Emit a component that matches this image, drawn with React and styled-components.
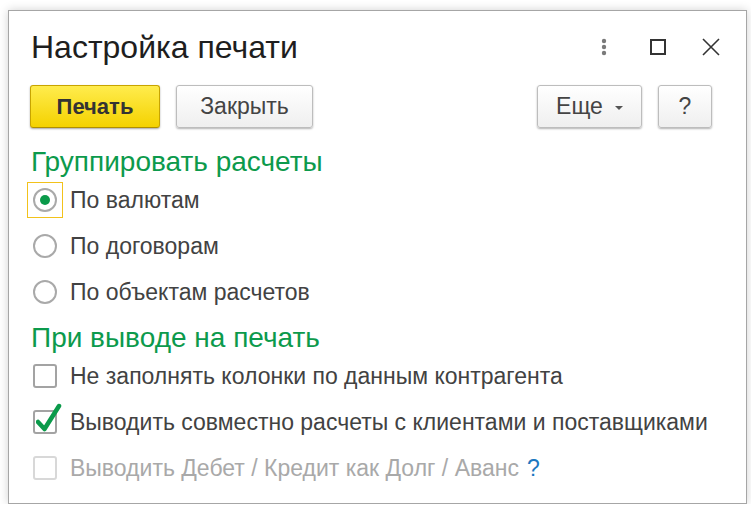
import React from "react";
import styled, { createGlobalStyle, css } from "styled-components";

const Global = createGlobalStyle`
  html, body { margin: 0; padding: 0; background: #fff; }
  body { font-family: "Liberation Sans", Arial, sans-serif; }
  * { box-sizing: border-box; }
`;

const Window = styled.div`
  margin: 10px 0 0 8px;
  width: 739px;
  height: 494px;
  border: 1px solid #a6a6a6;
  background: #fff;
  box-shadow: 0 0 9px rgba(0, 0, 0, 0.18);
  padding: 18px 26px 0 18px;
  display: flex;
  flex-direction: column;
`;

const TitleBar = styled.div`
  display: flex;
  align-items: center;
  height: 36px;
`;

const Title = styled.h1`
  margin: 0 0 0 4px;
  flex: 1;
  font-size: 32px;
  font-weight: normal;
  line-height: 36px;
  color: #1e1e1e;
`;

const TitleIcons = styled.div`
  display: flex;
  align-items: center;
`;

const IconBtn = styled.span`
  display: flex;
  align-items: center;
  justify-content: center;
  width: ${(p) => p.$w}px;
  height: 26px;
  margin-left: ${(p) => p.$ml || 0}px;
`;

const Toolbar = styled.div`
  display: flex;
  align-items: center;
  gap: 16px;
  margin: 20px 8px 0 3px;
`;

const Spacer = styled.div`
  flex: 1;
`;

const Button = styled.button`
  height: 43px;
  width: ${(p) => p.$w}px;
  border-radius: 3px;
  font-family: inherit;
  font-size: 23px;
  display: flex;
  align-items: center;
  justify-content: center;
  gap: 12px;
  padding: 0;
  cursor: pointer;
  ${(p) =>
    p.$primary
      ? css`
          border: 1px solid #c8a400;
          border-bottom-color: #b08f00;
          background: linear-gradient(#ffec4d, #f4d200);
          color: #333;
          font-size: 22px;
          font-weight: bold;
          box-shadow: 0 1px 2px rgba(0, 0, 0, 0.35);
        `
      : css`
          border: 1px solid #bdbdbd;
          background: linear-gradient(#ffffff, #efefef);
          color: #444;
          box-shadow: 0 1px 2px rgba(0, 0, 0, 0.3);
        `}
`;

const Arrow = styled.span`
  width: 0;
  height: 0;
  border-left: 4px solid transparent;
  border-right: 4px solid transparent;
  border-top: 4px solid #555;
  margin-top: 3px;
`;

const Heading = styled.h2`
  margin: ${(p) => p.$mt}px 0 0 4px;
  font-size: 28px;
  font-weight: normal;
  line-height: 30px;
  color: #0c9a4c;
`;

const Row = styled.label`
  display: flex;
  align-items: center;
  height: 46px;
  font-size: 23px;
  color: ${(p) => (p.$disabled ? "#a9a9a9" : "#424242")};
`;

const RadioWrap = styled.span`
  width: 36px;
  height: 36px;
  margin-right: 7px;
  display: flex;
  align-items: center;
  justify-content: center;
  border: 1px solid ${(p) => (p.$focus ? "#f2c21b" : "transparent")};
`;

const RadioCircle = styled.span`
  width: 24px;
  height: 24px;
  border-radius: 50%;
  border: 2px solid #a9a9a9;
  background: #fff;
  display: flex;
  align-items: center;
  justify-content: center;
`;

const Dot = styled.span`
  width: 10px;
  height: 10px;
  border-radius: 50%;
  background: #0a9a4a;
`;

const CheckWrap = styled.span`
  position: relative;
  width: 24px;
  height: 24px;
  margin-left: 6px;
  margin-right: 13px;
  border: 2px solid ${(p) => (p.$disabled ? "#d8d8d8" : "#a3a3a3")};
  border-radius: 3px;
  background: #fff;
`;

const CheckMark = styled.svg`
  position: absolute;
  left: 1px;
  top: -9px;
`;

const Help = styled.span`
  color: #1c78c0;
  margin-left: 8px;
`;

function Radio({ checked, focus, children }) {
  return (
    <Row>
      <RadioWrap $focus={focus}>
        <RadioCircle>{checked && <Dot />}</RadioCircle>
      </RadioWrap>
      {children}
    </Row>
  );
}

function Check({ checked, disabled, children }) {
  return (
    <Row $disabled={disabled}>
      <CheckWrap $disabled={disabled}>
        {checked && (
          <CheckMark width="26" height="30" viewBox="0 0 26 30">
            <path
              d="M2 19 L8.5 26 L23 3"
              fill="none"
              stroke="#0a9a4a"
              strokeWidth="4.5"
              strokeLinecap="round"
              strokeLinejoin="round"
            />
          </CheckMark>
        )}
      </CheckWrap>
      {children}
    </Row>
  );
}

export default function App() {
  return (
    <>
      <Global />
      <Window>
        <TitleBar>
          <Title>Настройка печати</Title>
          <TitleIcons>
            <IconBtn $w={6}>
              <svg width="6" height="18" viewBox="0 0 6 18">
                <circle cx="3" cy="3" r="2.2" fill="#7a7a7a" />
                <circle cx="3" cy="9" r="2.2" fill="#7a7a7a" />
                <circle cx="3" cy="15" r="2.2" fill="#7a7a7a" />
              </svg>
            </IconBtn>
            <IconBtn $w={16} $ml={43}>
              <svg width="16" height="16" viewBox="0 0 16 16">
                <rect x="1" y="1" width="14" height="14" fill="none" stroke="#333" strokeWidth="2" />
              </svg>
            </IconBtn>
            <IconBtn $w={18} $ml={36}>
              <svg width="18" height="18" viewBox="0 0 18 18">
                <path d="M1 1 L17 17 M17 1 L1 17" stroke="#333" strokeWidth="1.6" />
              </svg>
            </IconBtn>
          </TitleIcons>
        </TitleBar>

        <Toolbar>
          <Button $primary $w={130}>Печать</Button>
          <Button $w={137}>Закрыть</Button>
          <Spacer />
          <Button $w={105}>
            Еще <Arrow />
          </Button>
          <Button $w={54}>?</Button>
        </Toolbar>

        <Heading $mt={19}>Группировать расчеты</Heading>
        <Radio checked focus>По валютам</Radio>
        <Radio>По договорам</Radio>
        <Radio>По объектам расчетов</Radio>

        <Heading $mt={8}>При выводе на печать</Heading>
        <Check>Не заполнять колонки по данным контрагента</Check>
        <Check checked>Выводить совместно расчеты с клиентами и поставщиками</Check>
        <Check disabled>
          Выводить Дебет / Кредит как Долг / Аванс<Help>?</Help>
        </Check>
      </Window>
    </>
  );
}
